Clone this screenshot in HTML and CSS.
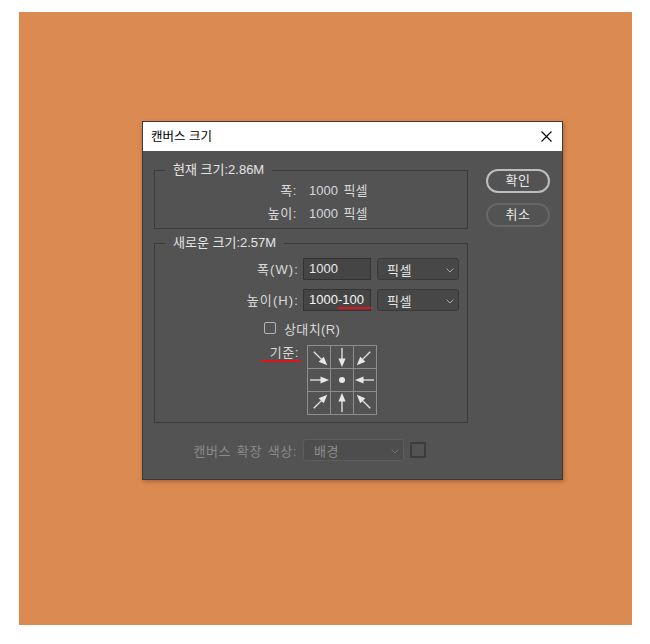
FILE: index.html
```html
<!DOCTYPE html>
<html lang="ko">
<head>
<meta charset="utf-8">
<title>캔버스 크기</title>
<link rel="stylesheet" href="styles.css">
</head>
<body>
<div class="stage">
  <div class="dialog">
    <div class="titlebar">
      <span class="title">캔버스 크기</span>
      <svg class="close" width="11" height="11" viewBox="0 0 11 11"><path d="M0.5 0.5 L10.5 10.5 M10.5 0.5 L0.5 10.5" stroke="#000" stroke-width="1.1" fill="none"/></svg>
    </div>
    <div class="body">
      <div class="groups">
        <fieldset class="group current">
          <legend>현재 크기:2.86M</legend>
          <div class="info-row"><span class="lbl">폭:</span><span class="val"><span class="num">1000</span> 픽셀</span></div>
          <div class="info-row"><span class="lbl">높이:</span><span class="val"><span class="num">1000</span> 픽셀</span></div>
        </fieldset>
        <fieldset class="group new">
          <legend>새로운 크기:2.57M</legend>
          <div class="field-row">
            <span class="lbl">폭(W):</span>
            <div class="input">1000</div>
            <div class="select">픽셀<svg class="chev" width="8" height="5" viewBox="0 0 8 5"><path d="M0.5 0.5 L4 4 L7.5 0.5" stroke="#a8a8a8" fill="none"/></svg></div>
          </div>
          <div class="field-row second">
            <span class="lbl">높이(H):</span>
            <div class="input bright">1000<span class="mark">-100</span></div>
            <div class="select">픽셀<svg class="chev" width="8" height="5" viewBox="0 0 8 5"><path d="M0.5 0.5 L4 4 L7.5 0.5" stroke="#a8a8a8" fill="none"/></svg></div>
          </div>
          <div class="check-row"><span class="checkbox"></span><span>상대치(R)</span></div>
          <div class="anchor-row">
            <span class="lbl"><span class="mark-label">기준:</span></span>
            <svg class="anchor" width="70" height="70" viewBox="0 0 70 70">
              <defs>
                <g id="arr">
                  <line x1="0" y1="-9.5" x2="0" y2="2" stroke="#e8e8e8" stroke-width="1.3"/>
                  <polygon points="-3.6,1 3.6,1 0,9.5" fill="#e8e8e8"/>
                </g>
              </defs>
              <rect x="0.5" y="0.5" width="69" height="69" fill="none" stroke="#8e8e8e"/>
              <path d="M23.5 0 V70 M46.5 0 V70 M0 23.5 H70 M0 46.5 H70" stroke="#8e8e8e"/>
              <use href="#arr" transform="translate(13.5 13.5) rotate(-45)"/>
              <use href="#arr" transform="translate(35 12.5)"/>
              <use href="#arr" transform="translate(56.5 13.5) rotate(45)"/>
              <use href="#arr" transform="translate(12.5 35) rotate(-90)"/>
              <circle cx="35" cy="35" r="3" fill="#e8e8e8"/>
              <use href="#arr" transform="translate(57.5 35) rotate(90)"/>
              <use href="#arr" transform="translate(13.5 56.5) rotate(-135)"/>
              <use href="#arr" transform="translate(35 57.5) rotate(180)"/>
              <use href="#arr" transform="translate(56.5 56.5) rotate(135)"/>
            </svg>
          </div>
        </fieldset>
        <div class="ext-row">
          <span class="lbl">캔버스 확장 색상:</span>
          <div class="select disabled">배경<svg class="chev" width="8" height="5" viewBox="0 0 8 5"><path d="M0.5 0.5 L4 4 L7.5 0.5" stroke="#6e6e6e" fill="none"/></svg></div>
          <span class="swatch"></span>
        </div>
      </div>
      <div class="buttons">
        <button class="btn primary">확인</button>
        <button class="btn">취소</button>
      </div>
    </div>
  </div>
</div>
</body>
</html>
```
FILE: styles.css
```css
html, body {
  margin: 0;
  padding: 0;
  background: #ffffff;
}

body {
  font-family: "Liberation Sans", "Noto Sans CJK KR", sans-serif;
  font-size: 13px;
  color: #dadada;
}

.stage {
  margin: 12px 0 0 19px;
  width: 613px;
  height: 613px;
  box-sizing: border-box;
  padding: 109px 0 0 123px;
  background: #db8a51;
}

.dialog {
  width: 421px;
  box-sizing: border-box;
  border: 1px solid #3a3a3a;
  background: #535353;
  box-shadow: 1px 2px 4px rgba(90, 40, 10, 0.35);
}

.titlebar {
  height: 29px;
  background: #ffffff;
  display: flex;
  align-items: center;
  justify-content: space-between;
  padding: 0 10px 0 8px;
}

.title {
  font-size: 12.5px;
  color: #000000;
  line-height: 16px;
}

.close {
  display: block;
}

.body {
  display: flex;
  align-items: flex-start;
  padding: 11px 12px 18px 11px;
}

.groups {
  width: 314px;
  flex: none;
}

.group {
  margin: 0;
  padding: 0;
  border: 1px solid #3b3b3b;
  min-width: 0;
}

.group legend {
  margin-left: 10px;
  padding: 0 8px;
  line-height: 16px;
  font-size: 13px;
  color: #e4e4e4;
}

.current {
  padding: 1px 0 3px;
}

.info-row {
  display: grid;
  grid-template-columns: 142px auto;
  column-gap: 12px;
  height: 23px;
  line-height: 23px;
  font-size: 13px;
}

.info-row .lbl {
  letter-spacing: 0.6px;
}

.info-row .val {
  word-spacing: 2px;
}

.lbl {
  text-align: right;
  white-space: nowrap;
}

.num {
  color: #d4d8dc;
}

.new {
  margin-top: 6px;
  padding: 6px 0 7px;
}

.field-row {
  display: grid;
  grid-template-columns: 144px 69px 83px;
  column-gap: 4px;
  align-items: center;
  height: 22px;
  font-size: 13px;
}

.field-row .lbl {
  letter-spacing: 1.1px;
}

.field-row.second {
  margin-top: 9px;
}

.input {
  box-sizing: border-box;
  height: 22px;
  line-height: 20px;
  padding-left: 5px;
  background: #454545;
  border: 1px solid #333333;
  color: #e8e8e8;
  font-size: 13px;
  margin-right: 1px;
}

.input.bright {
  color: #f6f6f6;
}

.mark,
.mark-label {
  position: relative;
}

.mark::after {
  content: "";
  position: absolute;
  left: 0;
  right: -7px;
  bottom: -2px;
  height: 2px;
  background: #e0141c;
}

.mark-label::after {
  content: "";
  position: absolute;
  left: -9px;
  right: -2px;
  bottom: -2px;
  height: 2px;
  background: #e0141c;
}

.select {
  box-sizing: border-box;
  height: 22px;
  display: flex;
  align-items: center;
  justify-content: space-between;
  padding: 0 4px 0 9px;
  background: #474747;
  border: 1px solid #3a3a3a;
  border-radius: 3px;
  color: #e4e4e4;
  font-size: 13px;
  letter-spacing: 0.5px;
  margin-left: 1px;
  margin-top: 1px;
}

.chev {
  display: block;
  margin-top: 2px;
}

.check-row {
  display: flex;
  align-items: center;
  height: 16px;
  margin-top: 10px;
  padding-left: 109px;
  gap: 8px;
  font-size: 13px;
  letter-spacing: 0.4px;
}

.checkbox {
  width: 12px;
  height: 12px;
  box-sizing: border-box;
  border: 1px solid #b4b4b4;
  border-radius: 2px;
}

.anchor-row {
  display: grid;
  grid-template-columns: 144px 70px;
  column-gap: 8px;
  align-items: start;
  margin-top: 9px;
}

.anchor-row .lbl {
  line-height: 16px;
  font-size: 13px;
  letter-spacing: 0.6px;
}

.anchor {
  display: block;
}

.ext-row {
  display: grid;
  grid-template-columns: 143px 101px 16px;
  column-gap: 6px;
  align-items: center;
  margin-top: 16px;
  height: 22px;
  color: #8a8a8a;
}

.ext-row .lbl {
  letter-spacing: 0.6px;
  word-spacing: 1.5px;
}

.select.disabled {
  background: #4d4d4d;
  border-color: #5d5d5d;
  color: #8c8c8c;
  padding-left: 10px;
  margin: 0;
}

.swatch {
  width: 16px;
  height: 16px;
  box-sizing: border-box;
  border: 2px solid #3c3c3c;
}

.buttons {
  margin-left: 18px;
  margin-top: 7px;
  display: flex;
  flex-direction: column;
  gap: 10px;
}

.btn {
  width: 64px;
  height: 24px;
  box-sizing: border-box;
  border-radius: 12px;
  border: 2px solid #666666;
  background: #535353;
  color: #e8e8e8;
  font-family: "Liberation Sans", "Noto Sans CJK KR", sans-serif;
  font-size: 13px;
  letter-spacing: 0.5px;
  line-height: 18px;
  padding: 0;
}

.btn.primary {
  border-color: #bdbdbd;
}
```
